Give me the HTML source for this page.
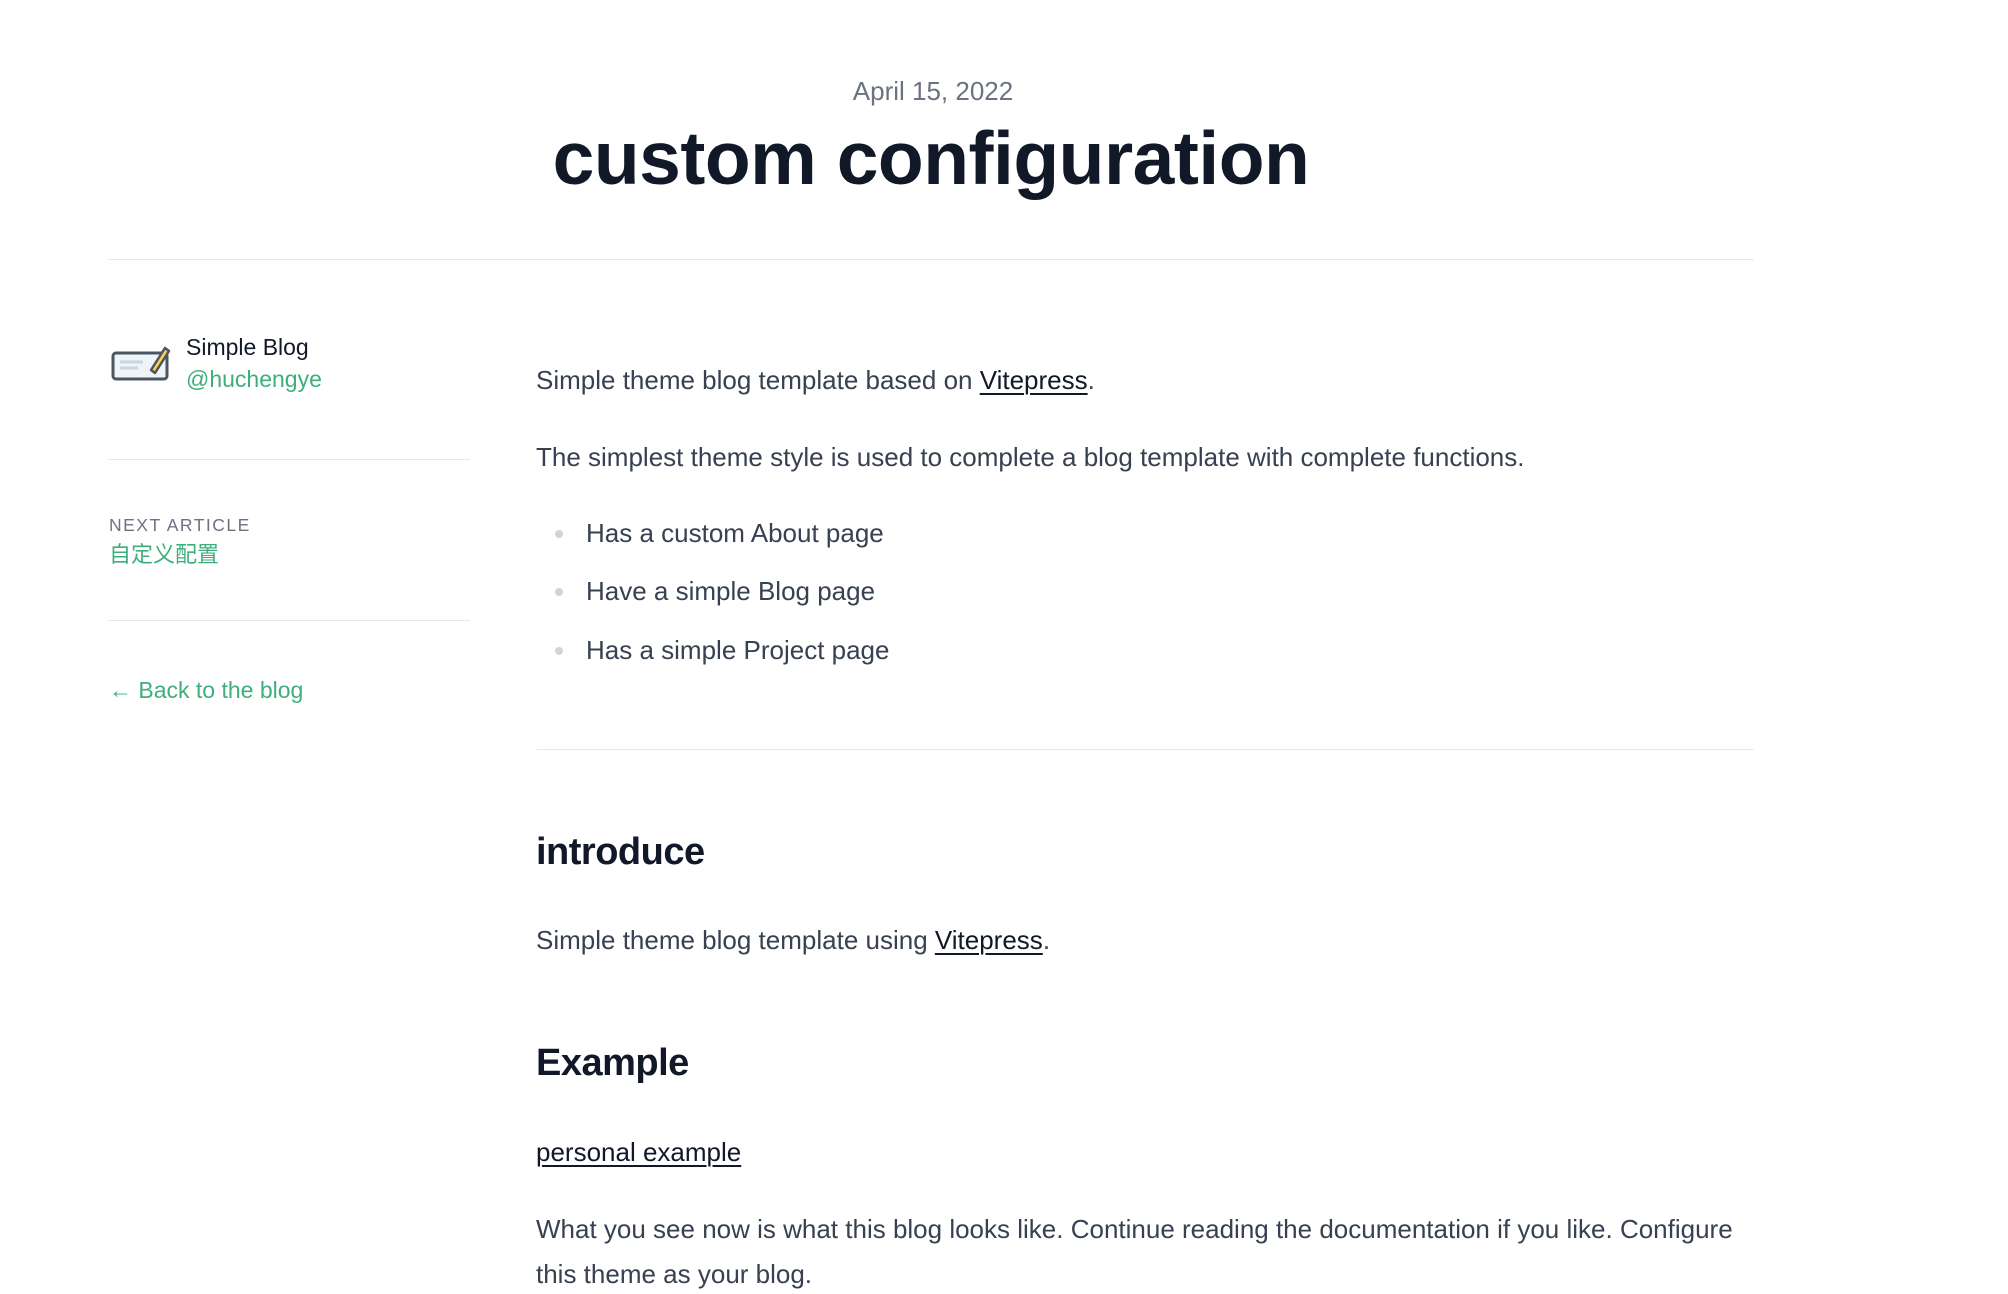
<!DOCTYPE html>
<html><head><meta charset="utf-8"><style>
*{margin:0;padding:0;box-sizing:border-box}
body{width:2008px;height:1294px;background:#fff;font-family:"Liberation Sans","Noto Sans CJK SC",sans-serif;color:#374151;position:relative;overflow:hidden}
.a{position:absolute;white-space:nowrap;line-height:40px}
.hr{position:absolute;height:1px;background:#e5e7eb}
a{color:#111827;text-decoration:underline;text-underline-offset:4px;text-decoration-thickness:2px}
.g{color:#3eaf7c}
.p{font-size:26px;left:536px}
.li{font-size:26px;left:586px}
.dot{position:absolute;left:555px;width:8px;height:8px;border-radius:50%;background:#d1d5db}
h2{position:absolute;left:536px;font-size:38px;font-weight:bold;color:#111827;line-height:50px;letter-spacing:-0.5px}
</style></head><body>
<div class="a" style="left:0;width:1866px;text-align:center;top:71px;font-size:26px;color:#6b7280">April 15, 2022</div>
<div class="a" style="left:0;width:1862px;text-align:center;top:108px;line-height:100px;font-size:75px;font-weight:bold;color:#111827;letter-spacing:-0.5px">custom configuration</div>
<div class="hr" style="left:109px;width:1645px;top:259px"></div>

<svg style="position:absolute;left:111px;top:343px" width="60" height="40" viewBox="0 0 60 40">
<rect x="2" y="10" width="54" height="26" rx="3" fill="#eef4f8" stroke="#4b5563" stroke-width="3"/>
<line x1="9" y1="19" x2="32" y2="19" stroke="#cbd5e1" stroke-width="3"/>
<line x1="9" y1="25" x2="27" y2="25" stroke="#cbd5e1" stroke-width="3"/>
<path d="M40 27 L54 5 L58 8 L44 30 Z" fill="#fcd34d" stroke="#4b5563" stroke-width="2.5" stroke-linejoin="round"/>
</svg>
<div class="a" style="left:186px;top:327px;font-size:23px;color:#111827">Simple Blog</div>
<div class="a g" style="left:186px;top:359px;font-size:23px">@huchengye</div>
<div class="hr" style="left:109px;width:361px;top:459px"></div>
<div class="a" style="left:109px;top:505px;font-size:17.5px;color:#6b7280;letter-spacing:1.5px">NEXT ARTICLE</div>
<div class="a g" style="left:109px;top:535px;font-size:22px">自定义配置</div>
<div class="hr" style="left:109px;width:361px;top:620px"></div>
<div class="a g" style="left:109px;top:670px;font-size:23px">← Back to the blog</div>

<div class="a p" style="top:360px">Simple theme blog template based on <a href="#">Vitepress</a>.</div>
<div class="a p" style="top:437px">The simplest theme style is used to complete a blog template with complete functions.</div>
<div class="dot" style="top:530px"></div><div class="a li" style="top:513px">Has a custom About page</div>
<div class="dot" style="top:588px"></div><div class="a li" style="top:571px">Have a simple Blog page</div>
<div class="dot" style="top:647px"></div><div class="a li" style="top:630px">Has a simple Project page</div>
<div class="hr" style="left:537px;width:1217px;top:749px"></div>
<h2 style="top:827px">introduce</h2>
<div class="a p" style="top:920px">Simple theme blog template using <a href="#">Vitepress</a>.</div>
<h2 style="top:1038px">Example</h2>
<div class="a p" style="top:1132px"><a href="#">personal example</a></div>
<div class="a p" style="top:1209px">What you see now is what this blog looks like. Continue reading the documentation if you like. Configure</div>
<div class="a p" style="top:1254px">this theme as your blog.</div>
</body></html>
